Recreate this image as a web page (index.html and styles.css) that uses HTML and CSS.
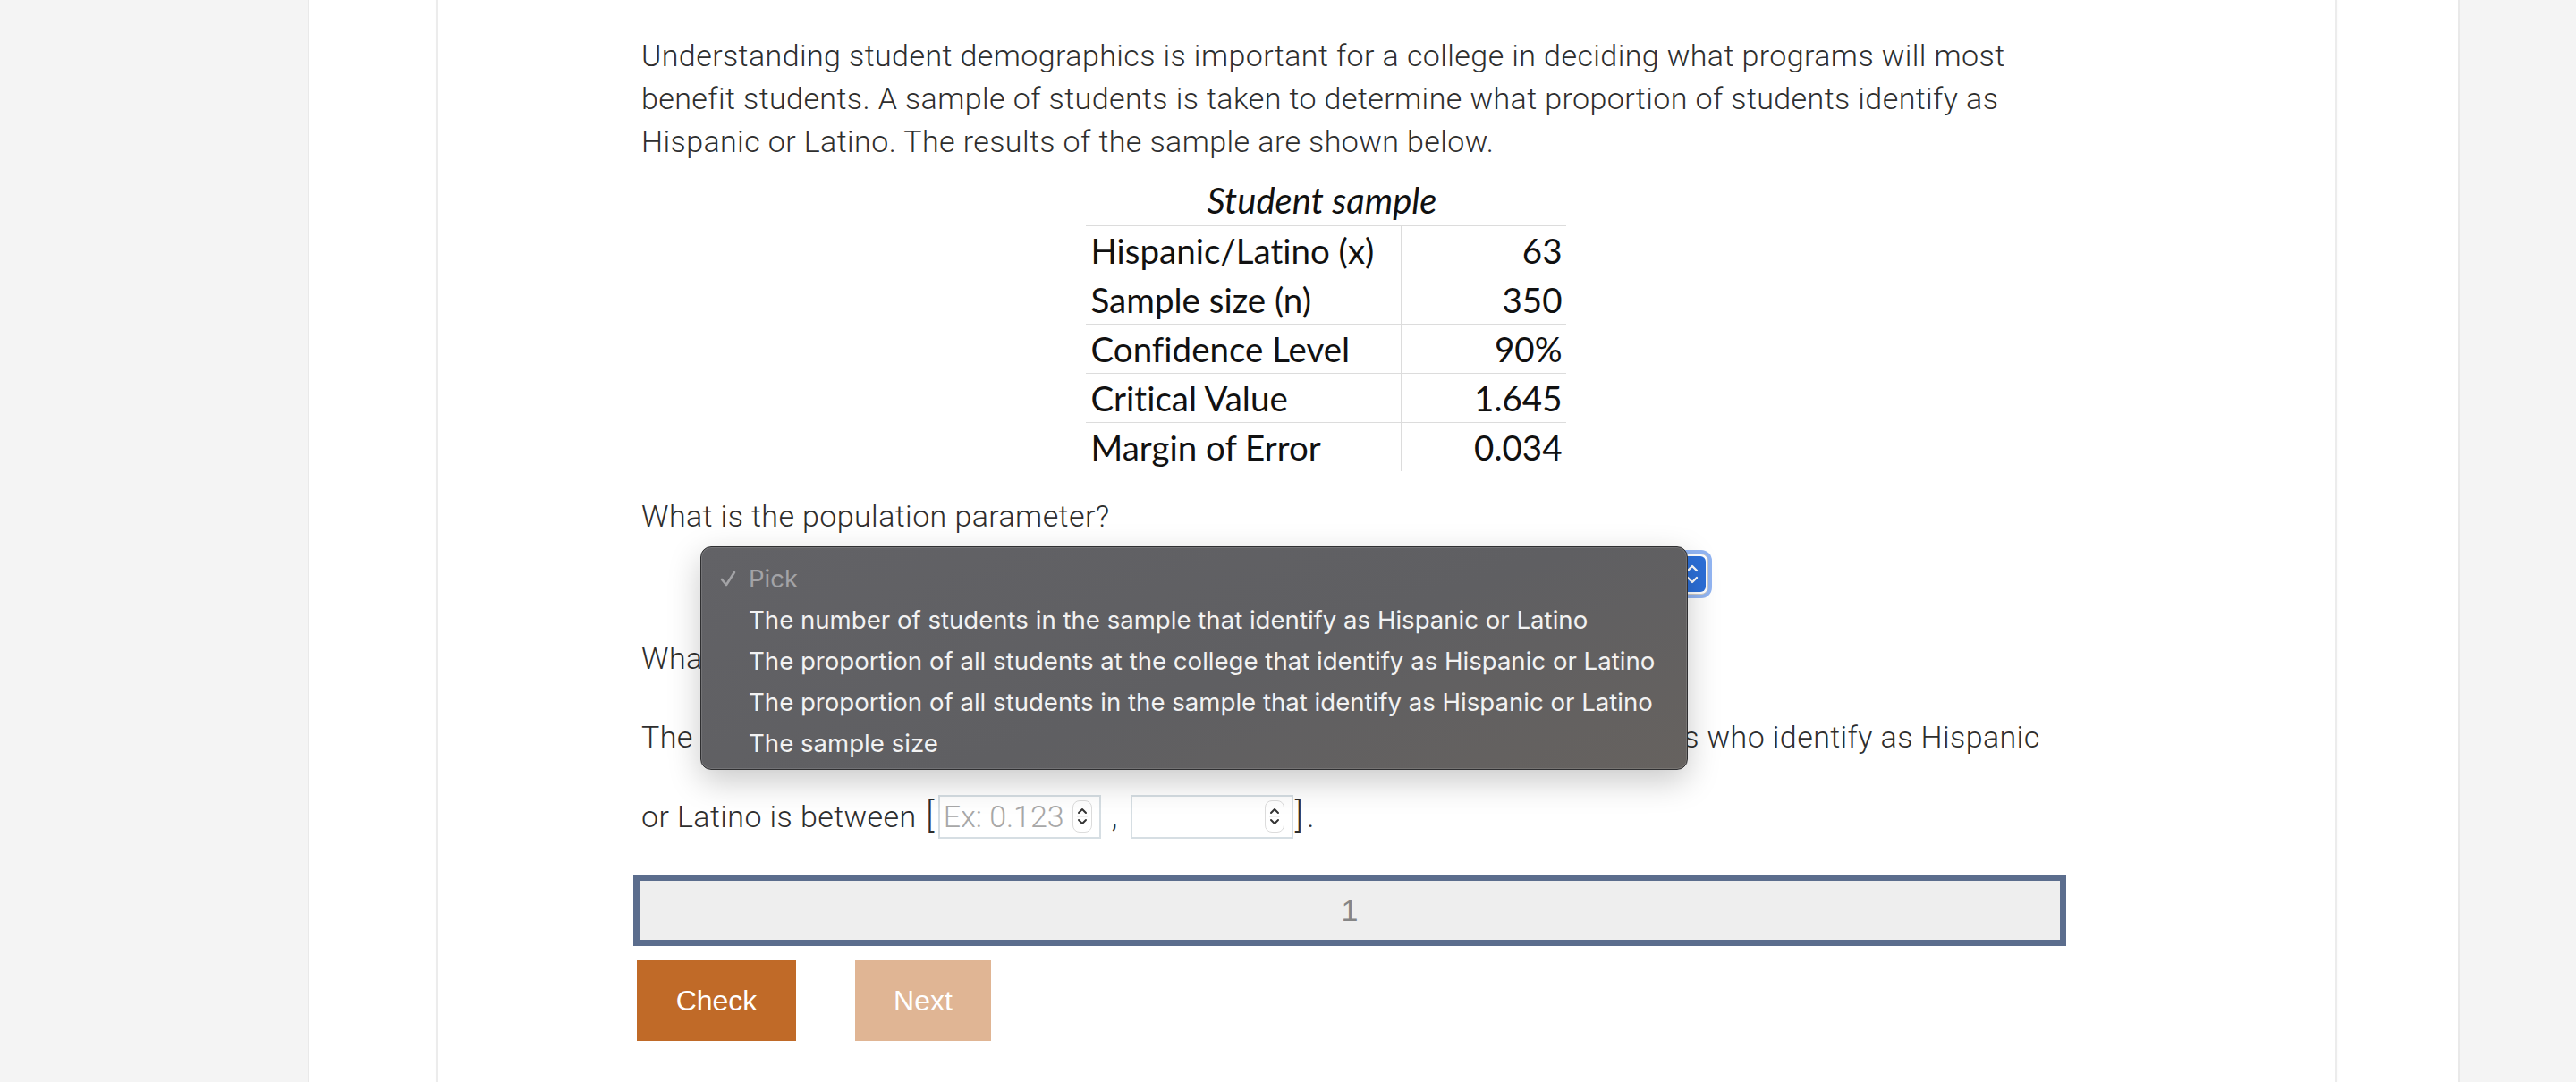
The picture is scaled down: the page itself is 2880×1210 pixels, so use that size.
FILE: index.html
```html
<!DOCTYPE html>
<html lang="en">
<head>
<meta charset="utf-8">
<title>Question</title>
<link rel="stylesheet" href="styles.css">
</head>
<body>
<div class="page">
  <div class="panel">
    <div class="content">
      <p class="text intro">Understanding student demographics is important for a college in deciding what programs will most benefit students. A sample of students is taken to determine what proportion of students identify as Hispanic or Latino. The results of the sample are shown below.</p>

      <div class="figure">
        <div class="caption">Student sample</div>
        <table class="sample">
          <tr><td class="lbl">Hispanic/Latino (x)</td><td class="val">63</td></tr>
          <tr><td class="lbl">Sample size (n)</td><td class="val">350</td></tr>
          <tr><td class="lbl">Confidence Level</td><td class="val">90%</td></tr>
          <tr><td class="lbl">Critical Value</td><td class="val">1.645</td></tr>
          <tr><td class="lbl">Margin of Error</td><td class="val">0.034</td></tr>
        </table>
      </div>

      <p class="text q1">What is the population parameter?</p>

      <div class="select-row">
        <div class="select">
          <span class="select-value">Pick</span>
          <span class="select-btn">
            <svg width="16" height="26" viewBox="0 0 16 26"><path d="M3 9 L8 4 L13 9 M3 17 L8 22 L13 17" fill="none" stroke="#fff" stroke-width="2.4" stroke-linecap="round" stroke-linejoin="round"/></svg>
          </span>
          <div class="menu">
            <div class="menu-item picked"><svg class="check" width="18" height="20" viewBox="0 0 18 20"><path d="M2 11 L7 17 L16 3" fill="none" stroke="#a3a3a6" stroke-width="2.6" stroke-linecap="round" stroke-linejoin="round"/></svg>Pick</div>
            <div class="menu-item">The number of students in the sample that identify as Hispanic or Latino</div>
            <div class="menu-item">The proportion of all students at the college that identify as Hispanic or Latino</div>
            <div class="menu-item">The proportion of all students in the sample that identify as Hispanic or Latino</div>
            <div class="menu-item">The sample size</div>
          </div>
        </div>
      </div>

      <p class="text q2">What is the sample proportion?</p>

      <p class="text interval">The <span class="behind">90% confidence interval for the true proportion of all the college's student</span>s who identify as Hispanic<br>or Latino is between <span class="bracket">[</span><span class="num"><span class="ph">Ex: 0.123</span><span class="spin"><svg width="14" height="28" viewBox="0 0 14 28"><path d="M3 10 L7 6 L11 10 M3 18 L7 22 L11 18" fill="none" stroke="#333" stroke-width="2" stroke-linecap="round" stroke-linejoin="round"/><path d="M1 14 H13" stroke="#e2e2e2" stroke-width="1"/></svg></span></span><span class="comma">,</span><span class="num"><span class="ph"></span><span class="spin"><svg width="14" height="28" viewBox="0 0 14 28"><path d="M3 10 L7 6 L11 10 M3 18 L7 22 L11 18" fill="none" stroke="#333" stroke-width="2" stroke-linecap="round" stroke-linejoin="round"/><path d="M1 14 H13" stroke="#e2e2e2" stroke-width="1"/></svg></span></span><span class="bracket">]</span>.</p>

      <div class="progress"><span>1</span></div>

      <div class="actions">
        <button class="btn check-btn">Check</button>
        <button class="btn next-btn">Next</button>
      </div>
    </div>
  </div>
</div>
</body>
</html>
```

FILE: styles.css
```css
html, body {
  margin: 0;
  padding: 0;
}
body {
  background: #f4f4f4;
  font-family: Roboto, "Liberation Sans", sans-serif;
  color: #333;
  height: 1210px;
  overflow: hidden;
}
.page {
  margin-left: 344px;
  width: 2402px;
  height: 1210px;
  background: #fff;
  border-left: 2px solid #e9e9e9;
  border-right: 2px solid #e9e9e9;
}
.panel {
  margin-left: 142px;
  width: 2121px;
  height: 1210px;
  background: #fff;
  border-left: 2px solid #ececec;
  border-right: 2px solid #ececec;
  box-shadow: 0 0 3px rgba(0,0,0,0.04);
}
.content {
  margin-left: 218px;
  width: 1602px;
  padding-top: 38px;
}
.text {
  margin: 0;
  padding: 0 0 0 9px;
  font-size: 34px;
  letter-spacing: 0.4px;
  font-weight: 300;
  line-height: 48px;
  color: #2e2e2e;
}
.figure {
  margin-top: 20px;
  margin-right: 54px;
  display: flex;
  flex-direction: column;
  align-items: center;
}
.caption {
  font-family: Lato, "Open Sans", sans-serif;
  font-style: italic;
  font-size: 40px;
  line-height: 44px;
  padding-bottom: 6px;
  color: #111;
  margin-left: -8px;
}
.sample {
  border-collapse: collapse;
  font-family: Lato, "Open Sans", sans-serif;
  font-variant-ligatures: none;
  font-size: 38.5px;
  color: #111;
}
.sample td {
  height: 54px;
  border-top: 1px solid #dcdcdc;
  padding: 0;
  line-height: 54px;
}
.sample .lbl {
  width: 346px;
  padding-left: 6px;
  border-right: 1px solid #dcdcdc;
}
.sample .val {
  width: 180px;
  text-align: right;
  padding-right: 4px;
}
.q1 {
  margin-top: 26px;
}
.select-row {
  margin-top: 18px;
  padding-left: 82px;
  height: 48px;
}
.select {
  position: relative;
  width: 1120px;
  height: 46px;
  border: 1px solid #c9c9c9;
  border-radius: 8px;
  background: #fff;
  box-shadow: 0 0 0 4px rgba(110, 156, 238, 0.75);
  font-family: Inter, sans-serif;
  font-size: 26px;
  display: flex;
  align-items: center;
  box-sizing: border-box;
}
.select-value {
  padding-left: 14px;
  flex: 1;
}
.select-btn {
  width: 30px;
  height: 40px;
  margin-right: 2px;
  border-radius: 6px;
  background: #2c6fd8;
  display: flex;
  align-items: center;
  justify-content: center;
}
.menu {
  position: absolute;
  left: -8px;
  top: -9px;
  width: 1104px;
  height: 250px;
  box-sizing: border-box;
  padding-top: 12px;
  background: linear-gradient(160deg, #626266 0%, #5f5f62 55%, #66625f 100%);
  border: 1px solid #2f2f31;
  border-radius: 12px;
  box-shadow: 0 12px 36px rgba(0,0,0,0.22), inset 0 0 0 1px rgba(255,255,255,0.12);
  font-family: Inter, "Liberation Sans", sans-serif;
  font-size: 27.6px;
  color: #f2f2f2;
  z-index: 5;
}
.menu-item {
  height: 46px;
  line-height: 46px;
  padding-left: 53px;
  white-space: nowrap;
  position: relative;
}
.menu-item.picked {
  color: #a3a3a6;
}
.check {
  position: absolute;
  left: 21px;
  top: 13px;
}
.q2 {
  margin-top: 45px;
}
.interval {
  margin-top: 20px;
  line-height: 88px;
}
.behind {
  word-spacing: -1.2px;
}
.bracket {
  font-size: 38px;
  margin: 0 4px 0 2px;
}
.num {
  display: inline-flex;
  align-items: center;
  justify-content: space-between;
  vertical-align: middle;
  width: 182px;
  height: 49px;
  box-sizing: border-box;
  border: 2px solid #d6dee3;
  padding: 0 8px 0 4px;
  position: relative;
  top: -3px;
  letter-spacing: 0;
}
.ph {
  font-family: Roboto, sans-serif;
  font-weight: 300;
  font-size: 34px;
  color: #a8a8a8;
  line-height: 44px;
}
.spin {
  width: 22px;
  height: 36px;
  border: 1px solid #dcdcdc;
  border-radius: 8px;
  background: #fff;
  display: flex;
  align-items: center;
  justify-content: center;
  box-sizing: border-box;
}
.comma {
  margin: 0 14px 0 12px;
}
.progress {
  margin-top: 21px;
  height: 80px;
  box-sizing: border-box;
  border: 7px solid #5b6d8d;
  background: #eeeeee;
  display: flex;
  align-items: center;
  justify-content: center;
  font-family: "Liberation Sans", Arial, sans-serif;
  font-size: 34px;
  color: #858585;
}
.actions {
  margin-top: 16px;
  display: flex;
  gap: 66px;
  padding-left: 4px;
}
.btn {
  border: none;
  height: 90px;
  font-family: "Liberation Sans", Arial, sans-serif;
  font-size: 32px;
  color: #fff;
  padding: 0;
}
.check-btn {
  width: 178px;
  background: #c06a28;
}
.next-btn {
  width: 152px;
  background: #e0b594;
}
```
